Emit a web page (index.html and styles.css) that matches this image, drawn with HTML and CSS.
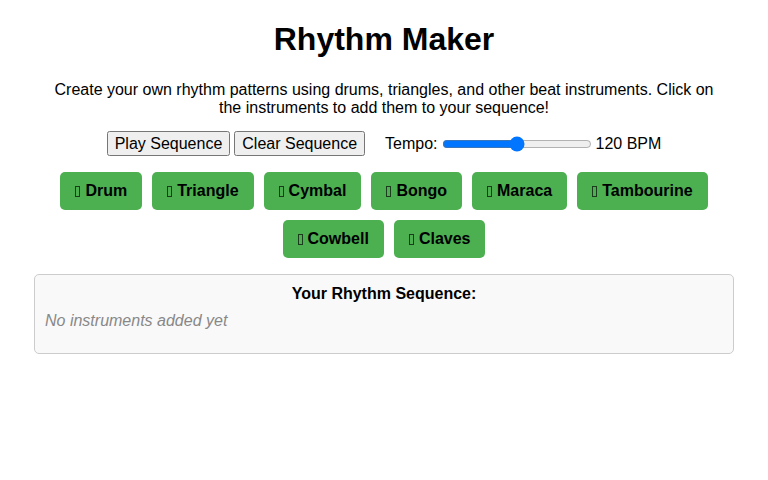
FILE: index.html
```html
<!DOCTYPE html>
<html>
<head>
<meta charset="utf-8">
<title>Rhythm Maker</title>
<link rel="stylesheet" href="styles.css">
</head>
<body>
<h1 class="title">Rhythm Maker</h1>
<p class="intro">Create your own rhythm patterns using drums, triangles, and other beat instruments. Click on the instruments to add them to your sequence!</p>
<div class="controls">
  <button class="ctrl">Play Sequence</button>
  <button class="ctrl">Clear Sequence</button>
  <label class="tempo">Tempo: <input type="range" class="slider" min="60" max="180" value="120"> <span>120 BPM</span></label>
</div>
<div class="instruments">
  <button class="inst"><span class="tofu"></span>Drum</button>
  <button class="inst"><span class="tofu"></span>Triangle</button>
  <button class="inst"><span class="tofu"></span>Cymbal</button>
  <button class="inst"><span class="tofu"></span>Bongo</button>
  <button class="inst"><span class="tofu"></span>Maraca</button>
  <button class="inst"><span class="tofu"></span>Tambourine</button>
  <button class="inst"><span class="tofu"></span>Cowbell</button>
  <button class="inst"><span class="tofu"></span>Claves</button>
</div>
<div class="sequence">
  <div class="seq-title">Your Rhythm Sequence:</div>
  <div class="seq-items"><span class="empty">No instruments added yet</span></div>
</div>
</body>
</html>
```
FILE: styles.css
```css
body {
  font-family: "Liberation Sans", Arial, sans-serif;
  max-width: 700px;
  margin: 0 auto;
  padding: 20px;
  color: #000;
}
.title {
  text-align: center;
  font-size: 32px;
  margin: 1px 0 23px;
}
.intro {
  text-align: center;
  font-size: 16px;
  margin: 0 20px 14px;
}
.controls {
  display: flex;
  justify-content: center;
  align-items: center;
  gap: 5px;
  margin-bottom: 16px;
}
.ctrl {
  font-family: "Liberation Sans", Arial, sans-serif;
  font-size: 16px;
  line-height: 18px;
  padding: 2px 6px 1px;
}
.ctrl + .ctrl {
  margin-left: -1px;
}
.tempo {
  margin-left: 15px;
  display: flex;
  align-items: center;
  gap: 4px;
}
.slider {
  width: 150px;
  margin: 0;
}
.instruments {
  display: flex;
  flex-wrap: wrap;
  justify-content: center;
  gap: 10px;
  margin-bottom: 16px;
}
.inst {
  font-family: "Liberation Sans", Arial, sans-serif;
  font-size: 16px;
  line-height: 18px;
  font-weight: bold;
  background: #4caf50;
  color: #000;
  border: none;
  border-radius: 5px;
  padding: 10px 15px;
}
.tofu {
  display: inline-block;
  width: 3px;
  height: 9px;
  border: 1px solid #1c3a1d;
  margin-right: 5px;
  vertical-align: -1px;
}
.sequence {
  background: #f9f9f9;
  border: 1px solid #ccc;
  border-radius: 5px;
  padding: 10px;
}
.seq-title {
  text-align: center;
  font-weight: bold;
  margin-bottom: 9px;
}
.seq-items {
  min-height: 31px;
}
.empty {
  font-style: italic;
  color: #888;
}
```
